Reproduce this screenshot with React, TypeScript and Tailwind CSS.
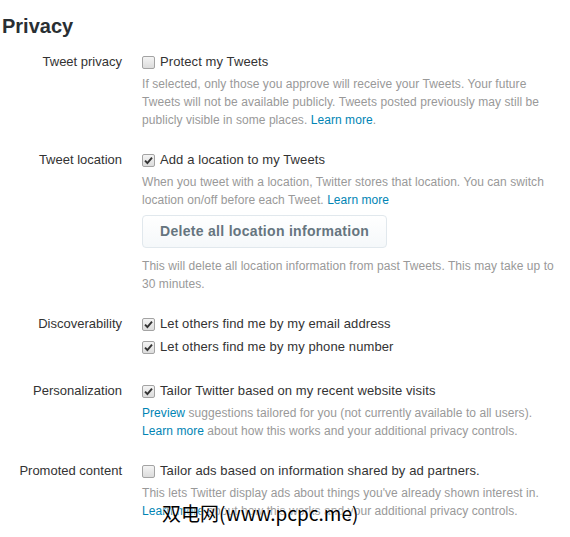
import React from 'react';

const Checkbox: React.FC<{ checked?: boolean }> = ({ checked }) => (
  <span className="w-[13px] h-[13px] shrink-0 rounded-[2px] border border-[#a3a3a3] bg-gradient-to-b from-[#f4f4f4] to-[#dcdcdc] flex items-center justify-center">
    {checked && (
      <svg width="9" height="9" viewBox="0 0 9 9">
        <path d="M1 4.6 L3.4 7 L8 1.6" fill="none" stroke="#333" strokeWidth="1.9" />
      </svg>
    )}
  </span>
);

const Option: React.FC<{ checked?: boolean; children: React.ReactNode }> = ({ checked, children }) => (
  <label className="flex items-center h-[18px] text-[13px] text-[#333] tracking-[0.1px]">
    <Checkbox checked={checked} />
    <span className="ml-[5px]">{children}</span>
  </label>
);

const Row: React.FC<{ label: string; className?: string; children: React.ReactNode }> = ({ label, className, children }) => (
  <div className={`flex ${className ?? ''}`}>
    <div className="w-[122px] shrink-0 text-right text-[13px] leading-[18px] text-[#333]">{label}</div>
    <div className="w-[414px] ml-5">{children}</div>
  </div>
);

const Link: React.FC<{ children: React.ReactNode }> = ({ children }) => (
  <a href="#" className="text-[#0084b4]">{children}</a>
);

const Desc: React.FC<{ className?: string; children: React.ReactNode }> = ({ className, children }) => (
  <p className={`text-[12px] leading-[18px] text-[#999] tracking-[0.06px] ${className ?? ''}`}>{children}</p>
);

export default function App() {
  return (
    <div className="relative w-[570px] h-[537px] bg-white overflow-hidden font-['Liberation_Sans',Arial,sans-serif]">
      <h1 className="pt-[14px] pl-[2px] text-[20px] leading-[24px] font-bold text-[#292f33]">Privacy</h1>

      <div className="mt-[15px]">
        <Row label="Tweet privacy" className="mb-[22px]">
          <Option>Protect my Tweets</Option>
          <Desc className="mt-1">
            If selected, only those you approve will receive your Tweets. Your future Tweets will not be available
            publicly. Tweets posted previously may still be publicly visible in some places. <Link>Learn more</Link>.
          </Desc>
        </Row>

        <Row label="Tweet location" className="mb-[22px]">
          <Option checked>Add a location to my Tweets</Option>
          <Desc className="mt-1">
            When you tweet with a location, Twitter stores that location. You can switch location on/off before each
            Tweet. <Link>Learn more</Link>
          </Desc>
          <button className="mt-[6px] h-[33px] px-[17px] rounded-[4px] border border-[#e1e8ed] bg-gradient-to-b from-white to-[#f5f8fa] text-[14px] font-bold tracking-[0.3px] text-[#66757f]">
            Delete all location information
          </button>
          <Desc className="mt-[9px]">
            This will delete all location information from past Tweets. This may take up to 30 minutes.
          </Desc>
        </Row>

        <Row label="Discoverability" className="mb-[26px]">
          <Option checked>Let others find me by my email address</Option>
          <div className="mt-[5px]">
            <Option checked>Let others find me by my phone number</Option>
          </div>
        </Row>

        <Row label="Personalization" className="mb-[22px]">
          <Option checked>Tailor Twitter based on my recent website visits</Option>
          <Desc className="mt-1">
            <Link>Preview</Link> suggestions tailored for you (not currently available to all users).{' '}
            <Link>Learn more</Link> about how this works and your additional privacy controls.
          </Desc>
        </Row>

        <Row label="Promoted content">
          <Option>Tailor ads based on information shared by ad partners.</Option>
          <Desc className="mt-1">
            This lets Twitter display ads about things you've already shown interest in.{' '}
            <Link>Learn more</Link> about how this works and your additional privacy controls.
          </Desc>
        </Row>
      </div>

      <div className="absolute left-[162px] top-[501px] text-[19px] leading-[24px] text-black font-['Noto_Sans_CJK_SC',sans-serif] [text-shadow:0_0_2px_#fff,0_0_2px_#fff]">
        双电网(www.pcpc.me)
      </div>
    </div>
  );
}
